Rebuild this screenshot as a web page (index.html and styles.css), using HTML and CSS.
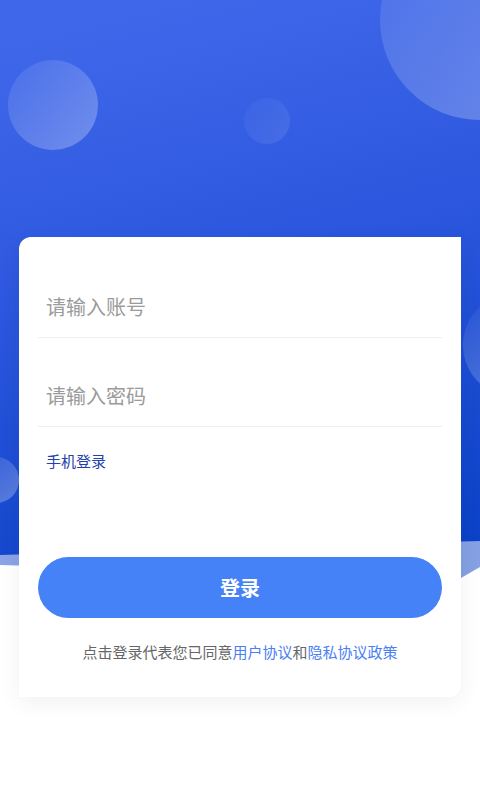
FILE: index.html
```html
<!DOCTYPE html>
<html lang="zh-CN">
<head>
<meta charset="utf-8">
<title>登录</title>
<link rel="stylesheet" href="styles.css">
</head>
<body>
<div class="page">
  <svg class="bg" viewBox="0 0 480 600" width="480" height="600" aria-hidden="true">
    <defs>
      <linearGradient id="bgGrad" x1="0.4" y1="0" x2="0.6" y2="1">
        <stop offset="0" stop-color="#3f67ea"/>
        <stop offset="0.42" stop-color="#2c57de"/>
        <stop offset="1" stop-color="#0a41c6"/>
      </linearGradient>
      <linearGradient id="cGrad" x1="0" y1="0" x2="1" y2="1">
        <stop offset="0" stop-color="#ffffff" stop-opacity="0.06"/>
        <stop offset="1" stop-color="#ffffff" stop-opacity="0.3"/>
      </linearGradient>
      <linearGradient id="cGradFaint" x1="0" y1="0" x2="1" y2="1">
        <stop offset="0" stop-color="#ffffff" stop-opacity="0.02"/>
        <stop offset="1" stop-color="#ffffff" stop-opacity="0.1"/>
      </linearGradient>
      <linearGradient id="cGradSide" x1="0" y1="0" x2="0.3" y2="1">
        <stop offset="0" stop-color="#ffffff" stop-opacity="0.02"/>
        <stop offset="1" stop-color="#ffffff" stop-opacity="0.22"/>
      </linearGradient>
    </defs>
    <rect x="0" y="0" width="480" height="600" fill="url(#bgGrad)"/>
    <circle cx="480" cy="20" r="100" fill="url(#cGrad)"/>
    <circle cx="53" cy="105" r="45" fill="url(#cGrad)"/>
    <circle cx="267" cy="121" r="23" fill="url(#cGradFaint)"/>
    <circle cx="515" cy="345" r="52" fill="url(#cGradSide)"/>
    <circle cx="-4" cy="480" r="23" fill="url(#cGrad)"/>
    <polygon points="0,555 480,541 480,600 0,600" fill="#ffffff" fill-opacity="0.5"/>
    <polygon points="0,565 461,578 480,567 480,600 0,600" fill="#ffffff"/>
  </svg>

  <main class="content">
    <div class="card">
      <div class="field">请输入账号</div>
      <div class="field field-second">请输入密码</div>
      <div class="phone-login">手机登录</div>
      <div class="login-btn">登录</div>
      <p class="agreement">点击登录代表您已同意<span class="link">用户协议</span>和<span class="link">隐私协议政策</span></p>
    </div>
  </main>
</div>
</body>
</html>
```

FILE: styles.css
```css
* {
  box-sizing: border-box;
}

html, body {
  margin: 0;
  padding: 0;
  background: #ffffff;
}

body {
  font-family: "Noto Sans CJK SC", "Noto Sans", sans-serif;
  width: 480px;
  height: 800px;
  overflow: hidden;
}

.page {
  position: relative;
  width: 480px;
  height: 800px;
}

.bg {
  position: absolute;
  top: 0;
  left: 0;
  display: block;
  z-index: 0;
}

.content {
  position: relative;
  z-index: 1;
  padding-top: 237px;
}

.card {
  margin: 0 19px;
  background: #ffffff;
  border-radius: 12px 0 12px 0;
  box-shadow: 0 6px 22px rgba(0, 0, 0, 0.06);
  padding: 40px 19px 34px;
  display: flex;
  flex-direction: column;
}

.field {
  height: 61px;
  border-bottom: 1px solid #efefef;
  display: flex;
  align-items: center;
  padding-left: 8px;
  padding-bottom: 1px;
  font-size: 20px;
  color: #9b9b9b;
}

.field-second {
  margin-top: 28px;
}

.phone-login {
  margin-top: 23px;
  padding-left: 8px;
  font-size: 15px;
  line-height: 22px;
  color: #2341a8;
}

.login-btn {
  margin-top: 85px;
  height: 61px;
  border-radius: 31px;
  background: #4581f7;
  color: #ffffff;
  font-size: 20px;
  font-weight: 700;
  display: flex;
  align-items: center;
  justify-content: center;
}

.agreement {
  margin: 23px 0 0;
  text-align: center;
  font-size: 15px;
  line-height: 22px;
  color: #666666;
}

.link {
  color: #4a7ef5;
}
```
